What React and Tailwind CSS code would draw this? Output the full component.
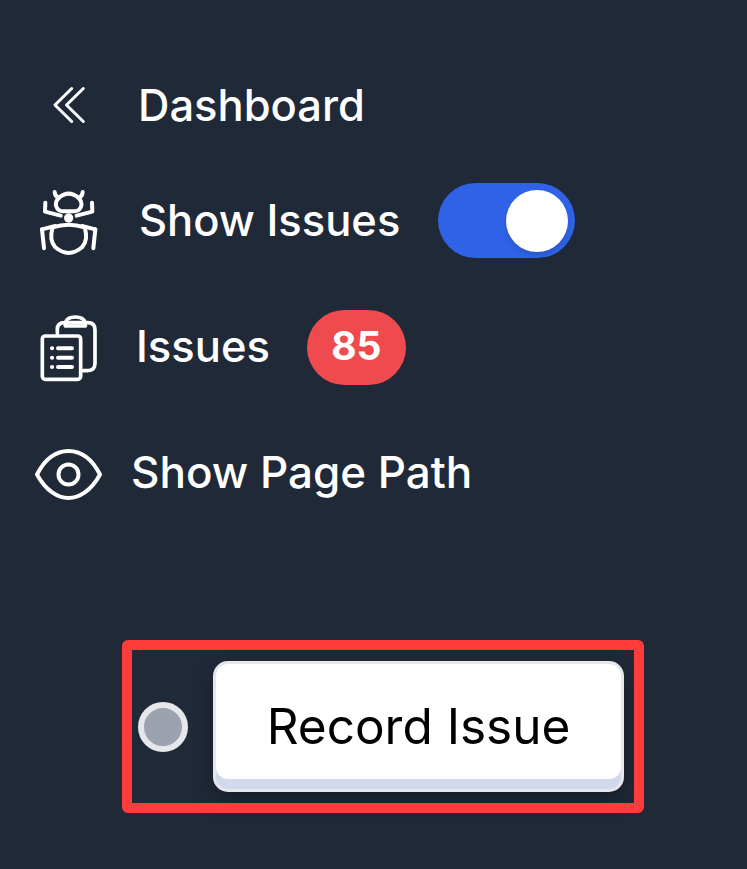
import React from "react";

const Chevrons = () => (
  <svg width="38" height="42" viewBox="50 85 38 42" fill="none" stroke="white" strokeWidth="3" strokeLinecap="round" strokeLinejoin="round">
    <path d="M71.7 89.5 L55 106 L71.7 122.5" />
    <path d="M83.3 89.5 L66.5 106 L83.3 122.5" />
  </svg>
);

const Bug = () => (
  <svg className="mt-[5px]" width="60" height="70" viewBox="57 354 180 210" fill="none" stroke="white" strokeWidth="12" strokeLinecap="round" strokeLinejoin="round">
    <path d="M104 366 Q104 378 116 384" />
    <path d="M188 366 Q188 378 176 384" />
    <path d="M116 384 Q146 358 176 384 Q188 396 183 410 Q178 424 162 424 L130 424 Q114 424 109 410 Q104 396 116 384 Z" />
    <circle cx="146" cy="444" r="14" fill="white" stroke="none" />
    <path d="M76 398 L75 425 L122 437" />
    <path d="M216 398 L217 425 L170 437" />
    <path d="M66 478 L72 535" />
    <path d="M226 478 L220 535" />
    <path d="M66 478 L106 468" />
    <path d="M226 478 L186 468" />
    <path d="M98 472 Q122 464 146 464 Q170 464 194 472 Q206 510 186 532 Q166 549 146 549 Q126 549 106 532 Q86 510 98 472 Z" />
  </svg>
);

const Clipboard = () => (
  <svg className="mt-[5px]" width="60" height="70" viewBox="57 45 180 210" fill="none" stroke="white" strokeWidth="11" strokeLinecap="round" strokeLinejoin="round">
    <path d="M112 100 V88 Q112 68 134 68 H203 Q225 68 225 90 V190 Q225 212 203 212 H190" />
    <path d="M136 78 Q134 51 166 51 Q198 51 196 78 Z" />
    <rect x="67" y="108" width="115" height="130" rx="9" />
    <path d="M114 145 H156 M114 173 H156 M114 201 H156" strokeWidth="12" />
    <path d="M96 145 H96.5 M96 173 H96.5 M96 201 H96.5" strokeWidth="12" />
  </svg>
);

const Eye = () => (
  <svg className="mt-[5px]" width="70" height="56" viewBox="0 0 70 56" fill="none" stroke="white" strokeWidth="4" strokeLinecap="round" strokeLinejoin="round">
    <path d="M3 27.5 C12 10 24 4 34.5 4 C45 4 57 10 66 27.5 C57 44 45 51 34.5 51 C24 51 12 44 3 27.5 Z" />
    <circle cx="34.5" cy="27.5" r="10" />
  </svg>
);

export default function App() {
  return (
    <div className="h-[869px] w-[747px] overflow-hidden bg-[#1f2937] pt-[75px] text-white font-['Inter',sans-serif] text-[43.5px] font-medium leading-[60px]">
      <div className="flex h-[60px] items-center pl-[50px]">
        <Chevrons />
        <span className="ml-[50px]">Dashboard</span>
      </div>
      <div className="mt-[48px] flex h-[75px] items-center pl-[39px]">
        <Bug />
        <span className="ml-[40px] mb-[2px]">Show Issues</span>
        <div className="ml-[38px] flex h-[75px] w-[137px] items-center justify-end rounded-full bg-[#2f62e6] pr-[7px]">
          <div className="h-[62px] w-[62px] rounded-full bg-white shadow-md"></div>
        </div>
      </div>
      <div className="mt-[52px] flex h-[75px] items-center pl-[39px]">
        <Clipboard />
        <span className="ml-[37px] mb-[4px]">Issues</span>
        <span className="ml-[37px] flex h-[75px] w-[99px] items-center justify-center rounded-full bg-[#ef4b4f] pb-[3px] text-[39px] font-bold">85</span>
      </div>
      <div className="mt-[57px] flex h-[60px] items-center pl-[34px]">
        <Eye />
        <span className="ml-[27px] text-[44px]">Show Page Path</span>
      </div>
      <div className="relative ml-[122px] mt-[138px] flex h-[173px] w-[522px] items-center pl-[16px]">
        <div className="h-[50px] w-[50px] rounded-full border-[6px] border-[#e5e7eb] bg-[#9ca3af]"></div>
        <div className="ml-[25px] h-[131px] w-[411px] rounded-[15px] border-[3px] border-[#e5e7eb] bg-[#d1d9ec] shadow-[0_10px_20px_rgba(0,0,0,0.25)]">
          <div className="flex h-[115px] items-center justify-center rounded-[12px] bg-white pt-[8px] text-[49.5px] font-normal text-black">Record Issue</div>
        </div>
        <div className="absolute inset-0 rounded-[6px] border-[10px] border-[#ff3b3b]"></div>
      </div>
    </div>
  );
}
